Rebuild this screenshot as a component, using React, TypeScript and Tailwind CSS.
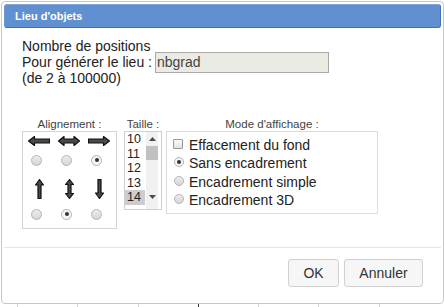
import React from 'react';

const font = "font-['Liberation_Sans',Arial,sans-serif]";

const HArrow = ({ kind }: { kind: 'left' | 'both' | 'right' }) => {
  const points =
    kind === 'left'
      ? '0.5,5 6.5,0.5 6.5,3 21.5,3 21.5,7 6.5,7 6.5,9.5'
      : kind === 'right'
      ? '21.5,5 15.5,0.5 15.5,3 0.5,3 0.5,7 15.5,7 15.5,9.5'
      : '0.5,5 6,0.5 6,3 16,3 16,0.5 21.5,5 16,9.5 16,7 6,7 6,9.5';
  return (
    <svg width="22" height="10" viewBox="0 0 22 10">
      <polygon points={points} fill="#4a4a4a" stroke="#111" strokeWidth="1.2" strokeLinejoin="round" />
    </svg>
  );
};

const VArrow = ({ kind }: { kind: 'up' | 'both' | 'down' }) => {
  const points =
    kind === 'up'
      ? '4.5,0.5 8.5,6 6,6 6,19.5 3,19.5 3,6 0.5,6'
      : kind === 'down'
      ? '4.5,19.5 8.5,14 6,14 6,0.5 3,0.5 3,14 0.5,14'
      : '4.5,0.5 8.5,5.5 6,5.5 6,14.5 8.5,14.5 4.5,19.5 0.5,14.5 3,14.5 3,5.5 0.5,5.5';
  return (
    <svg width="9" height="20" viewBox="0 0 9 20">
      <polygon points={points} fill="#4a4a4a" stroke="#111" strokeWidth="1.2" strokeLinejoin="round" />
    </svg>
  );
};

const Radio = ({ checked, size = 'md' }: { checked?: boolean; size?: 'sm' | 'md' }) => (
  <span
    className={`flex items-center justify-center rounded-full border border-[#b4b4b4] ${
      size === 'md' ? 'w-[11px] h-[11px]' : 'w-[10px] h-[10px]'
    } ${checked ? 'bg-[#f4f4f4]' : 'bg-gradient-to-b from-[#ececec] to-[#d6d6d6]'}`}
  >
    {checked && <span className="w-[4px] h-[4px] rounded-full bg-[#333]" />}
  </span>
);

const Triangle = ({ down }: { down?: boolean }) => (
  <svg width="7" height="4" viewBox="0 0 7 4">
    <polygon points={down ? '0,0 7,0 3.5,4' : '0,4 7,4 3.5,0'} fill="#4a4a4a" />
  </svg>
);

export default function App() {
  const sizes = ['10', '11', '12', '13', '14'];
  const modes = [
    { label: 'Sans encadrement', checked: true },
    { label: 'Encadrement simple', checked: false },
    { label: 'Encadrement 3D', checked: false },
  ];

  return (
    <div className={`w-[444px] h-[307px] bg-white overflow-hidden ${font}`}>
      <div className="ml-[1px] mt-[1px] w-[443px] h-[303px] border border-[#c8c8c8] rounded-[4px] p-[2px] flex flex-col bg-white">
        {/* title bar */}
        <div className="h-[24px] shrink-0 rounded-[3px] bg-[#6090d0] border border-[#3d70c2] border-t-[#80a6dc] border-l-[#6d98d4] flex items-center pl-[10px]">
          <span className="text-white text-[11px] font-bold">Lieu d'objets</span>
        </div>

        {/* content */}
        <div className="h-[219px] shrink-0 pt-[10px] pl-[18px] text-[#222]">
          <div className="text-[14px] leading-[16px]">
            <div className="h-[16px]">Nombre de positions</div>
            <div className="h-[16px] flex items-center">
              <span>Pour générer le lieu :</span>
              <input
                readOnly
                value="nbgrad"
                className="ml-[3px] w-[174px] h-[21px] shrink-0 bg-[#ebebe4] border border-[#a9a9a9] px-[1px] text-[14px] text-[#444] outline-none"
              />
            </div>
            <div className="h-[16px]">(de 2 à 100000)</div>
          </div>

          <div className="mt-[32px] flex items-start">
            {/* Alignement */}
            <div className="w-[95px] flex flex-col items-center">
              <div className="h-[13px] text-[11.5px] leading-[13px] text-[#444]">Alignement :</div>
              <div className="w-[95px] h-[98px] border border-[#d4d4d4] pl-[1px]">
                <div className="grid grid-cols-[30px_30px_30px] grid-rows-[18px_20px_38px_12px]">
                  <div className="flex items-center justify-center"><HArrow kind="left" /></div>
                  <div className="flex items-center justify-center"><HArrow kind="both" /></div>
                  <div className="flex items-center justify-center"><HArrow kind="right" /></div>
                  <div className="flex items-center justify-center pr-[5px]"><Radio /></div>
                  <div className="flex items-center justify-center pr-[5px]"><Radio /></div>
                  <div className="flex items-center justify-center pr-[5px]"><Radio checked /></div>
                  <div className="flex items-center justify-center"><VArrow kind="up" /></div>
                  <div className="flex items-center justify-center"><VArrow kind="both" /></div>
                  <div className="flex items-center justify-center"><VArrow kind="down" /></div>
                  <div className="flex items-center justify-center pr-[5px]"><Radio /></div>
                  <div className="flex items-center justify-center pr-[5px]"><Radio checked /></div>
                  <div className="flex items-center justify-center pr-[5px]"><Radio /></div>
                </div>
              </div>
            </div>

            {/* Taille */}
            <div className="ml-[7px] w-[38px] flex flex-col items-center">
              <div className="h-[13px] text-[11.5px] leading-[13px] text-[#444]">Taille :</div>
              <div className="w-[38px] h-[79px] border border-[#cfcfcf] flex">
                <div className="w-[20px] text-[12.5px] text-[#222]">
                  {sizes.map((s) => (
                    <div
                      key={s}
                      className={`h-[14.5px] leading-[14.5px] pl-[2px] ${s === '14' ? 'bg-[#cdcdcd]' : ''}`}
                    >
                      {s}
                    </div>
                  ))}
                </div>
                <div className="ml-[1px] w-[12px] bg-[#f1f1f1] flex flex-col pb-[5px]">
                  <div className="h-[14px] flex items-center justify-center"><Triangle /></div>
                  <div className="h-[14px] bg-[#c1c1c1]" />
                  <div className="flex-1" />
                  <div className="h-[14px] flex items-center justify-center"><Triangle down /></div>
                </div>
              </div>
            </div>

            {/* Mode d'affichage */}
            <div className="ml-[4px] w-[212px] flex flex-col items-center">
              <div className="h-[13px] text-[11.5px] leading-[13px] text-[#444]">Mode d'affichage :</div>
              <div className="w-[212px] h-[83px] border border-[#dcdcdc] pt-[4px] pl-[6px] text-[14px] text-[#222]">
                <div className="h-[18.5px] flex items-center">
                  <span className="w-[16px] flex">
                    <span className="w-[10px] h-[10px] mb-[3px] border border-[#9a9a9a] rounded-[1px] bg-gradient-to-b from-[#fafafa] to-[#e2e2e2]" />
                  </span>
                  <span>Effacement du fond</span>
                </div>
                {modes.map((m) => (
                  <div key={m.label} className="h-[18.5px] flex items-center">
                    <span className="w-[16px] flex pl-[1px] mb-[3px]">
                      <Radio checked={m.checked} size="sm" />
                    </span>
                    <span>{m.label}</span>
                  </div>
                ))}
              </div>
            </div>
          </div>
        </div>

        {/* footer */}
        <div className="flex-1 border-t border-[#e5e5e5] pt-[11px] pr-[18px] flex justify-end gap-[5px]">
          <button className="w-[51px] h-[28px] rounded-[3px] border border-[#d0d0d0] bg-[#f6f6f6] text-[14px] text-[#333]">
            OK
          </button>
          <button className="w-[79px] h-[28px] rounded-[3px] border border-[#d0d0d0] bg-[#f6f6f6] text-[14px] text-[#333]">
            Annuler
          </button>
        </div>
      </div>

      {/* spreadsheet grid peeking below the dialog */}
      <div className="h-[3px] flex pl-[17px]">
        {[0, 1, 2, 3, 4, 5, 6].map((i) => (
          <div
            key={i}
            className={`w-[60.3px] shrink-0 border-l ${i === 3 ? 'border-[#333]' : 'border-[#d4d4d4]'}`}
          />
        ))}
      </div>
    </div>
  );
}
